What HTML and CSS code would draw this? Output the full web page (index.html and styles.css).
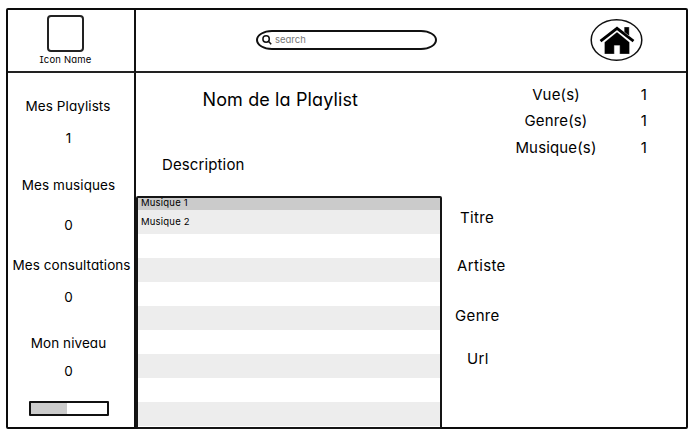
FILE: index.html
```html
<!DOCTYPE html>
<html lang="fr">
<head>
<meta charset="utf-8">
<title>Playlist</title>
<link rel="stylesheet" href="styles.css">
</head>
<body>
<div class="window">
  <header class="brand">
    <div class="brand-icon"></div>
    <span class="brand-name">Icon Name</span>
  </header>
  <header class="topbar">
    <div class="search">
      <svg class="search-icon" viewBox="0 0 10 10"><circle cx="4.1" cy="4" r="3.2"/><path d="M6.4 6.3L9.2 9.2"/></svg>
      <span class="search-text">search</span>
    </div>
    <svg class="home" viewBox="0 0 54 44">
      <ellipse cx="26.5" cy="22" rx="25.3" ry="20.2"/>
      <path class="roof" d="M10.5 23.2L27 10.3L43.5 23.2"/>
      <path class="house" d="M34.2 9h5v9l-5-4zM14.5 24.2L27 14L39.5 24.2V36H29.7V27.5H24.3V36H14.5z"/>
    </svg>
  </header>
  <nav class="sidebar">
    <div class="label playlists">Mes Playlists</div>
    <div class="count c1">1</div>
    <div class="label musiques">Mes musiques</div>
    <div class="count c2">0</div>
    <div class="label consultations">Mes consultations</div>
    <div class="count c3">0</div>
    <div class="label niveau">Mon niveau</div>
    <div class="count c4">0</div>
    <div class="progress"><div class="progress-fill"></div></div>
  </nav>
  <main class="content">
    <section class="playlist">
      <h1 class="title">Nom de la Playlist</h1>
      <p class="description">Description</p>
      <ul class="tracks">
        <li class="track selected">Musique 1</li>
        <li class="track">Musique 2</li>
        <li class="track"></li>
        <li class="track"></li>
        <li class="track"></li>
        <li class="track"></li>
        <li class="track"></li>
        <li class="track"></li>
        <li class="track"></li>
        <li class="track"></li>
      </ul>
    </section>
    <aside class="details">
      <div class="stats">
        <span class="vues">Vue(s)</span><span>1</span>
        <span class="genres">Genre(s)</span><span>1</span>
        <span class="total">Musique(s)</span><span>1</span>
      </div>
      <div class="fields">
        <div class="titre">Titre</div>
        <div class="artiste">Artiste</div>
        <div class="genre">Genre</div>
        <div class="url">Url</div>
      </div>
    </aside>
  </main>
</div>
</body>
</html>
```
FILE: styles.css
```css
* { box-sizing: border-box; }

body {
  margin: 0;
  background: #fff;
  color: #000;
  font-family: Inter, "Liberation Sans", sans-serif;
  font-feature-settings: "cv11", "ss03";
  font-size: 13.5px;
  line-height: 20px;
}

.window {
  width: 682px;
  height: 421px;
  margin: 8px 0 0 6px;
  border: 2px solid #0c0c0c;
  border-radius: 2px;
  display: grid;
  grid-template-columns: 128px 1fr;
  grid-template-rows: 63px 1fr;
}

.brand {
  border-right: 2px solid #111;
  border-bottom: 2px solid #222;
  padding: 5px 11px 0 0;
  display: flex;
  flex-direction: column;
  align-items: center;
}
.brand-icon {
  width: 37px;
  height: 37px;
  border: 2px solid #222;
  border-radius: 4px;
}
.brand-name {
  font-size: 9.5px;
  line-height: 15px;
  letter-spacing: .2px;
  font-feature-settings: "cv11", "cv08";
}

.topbar {
  border-bottom: 2px solid #222;
  display: flex;
  align-items: flex-start;
}
.search {
  width: 181px;
  height: 20px;
  margin: 20px 0 0 120px;
  border: 2px solid #111;
  border-radius: 16px / 10px;
  display: flex;
  align-items: center;
  gap: 3px;
  padding-left: 4px;
}
.search-icon { width: 10px; height: 10px; fill: none; stroke: #111; stroke-width: 1.5; }
.search-text { color: #777; font-size: 9.5px; line-height: 14px; }
.home { width: 54px; height: 44px; margin: 8px 0 0 153px; }
.home ellipse { fill: #fff; stroke: #111; stroke-width: 1.5; }
.roof { fill: none; stroke: #000; stroke-width: 2.8; }
.house { fill: #000; stroke: #fff; stroke-width: .3; }

.sidebar {
  border-right: 2px solid #111;
  padding-right: 5px;
  display: flex;
  flex-direction: column;
  align-items: center;
}
.label, .count { white-space: nowrap; }
.label { letter-spacing: .08px; }
.playlists { margin-top: 23px; margin-right: 1px; }
.c1 { margin-top: 12px; }
.musiques { margin-top: 27px; }
.c2 { margin-top: 20px; }
.consultations { margin-top: 20px; margin-right: -6px; }
.c3 { margin-top: 12px; }
.niveau { margin-top: 26px; }
.c4 { margin-top: 8px; }
.progress {
  width: 80px;
  height: 15px;
  margin-top: 20px;
  border: 2px solid #111;
  border-radius: 1px;
}
.progress-fill { width: 36px; height: 11px; background: #cbcbcb; }

.content { display: grid; grid-template-columns: 306px 1fr; }
.playlist { display: flex; flex-direction: column; }
.title {
  margin: 15px 0 0 66.5px;
  font-size: 18px;
  font-weight: 400;
  line-height: 24px;
  letter-spacing: .12px;
  white-space: nowrap;
}
.description { margin: 43px 0 0 26px; font-size: 15px; line-height: 20px; letter-spacing: .12px; }
.tracks {
  height: 233px;
  margin: 21px 0 0;
  padding: 0;
  border: 2px solid #151515;
  border-radius: 2px;
  list-style: none;
  overflow: hidden;
}
.track { height: 24px; padding-left: 3px; font-size: 9.5px; line-height: 24px; letter-spacing: .2px; }
.track:nth-child(even) { background: #ededed; }
.track.selected { height: 12px; line-height: 10px; background: #cbcbcb; }

.details { font-size: 15px; line-height: 20px; letter-spacing: .15px; white-space: nowrap; }
.stats {
  display: grid;
  grid-template-columns: 100px 12px;
  grid-auto-rows: 26.4px;
  column-gap: 32px;
  margin: 12px 0 0 64px;
  text-align: center;
}
.fields { display: flex; flex-direction: column; align-items: flex-start; letter-spacing: .35px; }
.titre { margin: 43.9px 0 0 18px; }
.artiste { margin: 28px 0 0 15px; }
.genre { margin: 30px 0 0 13px; }
.url { margin: 23px 0 0 25px; }
```
